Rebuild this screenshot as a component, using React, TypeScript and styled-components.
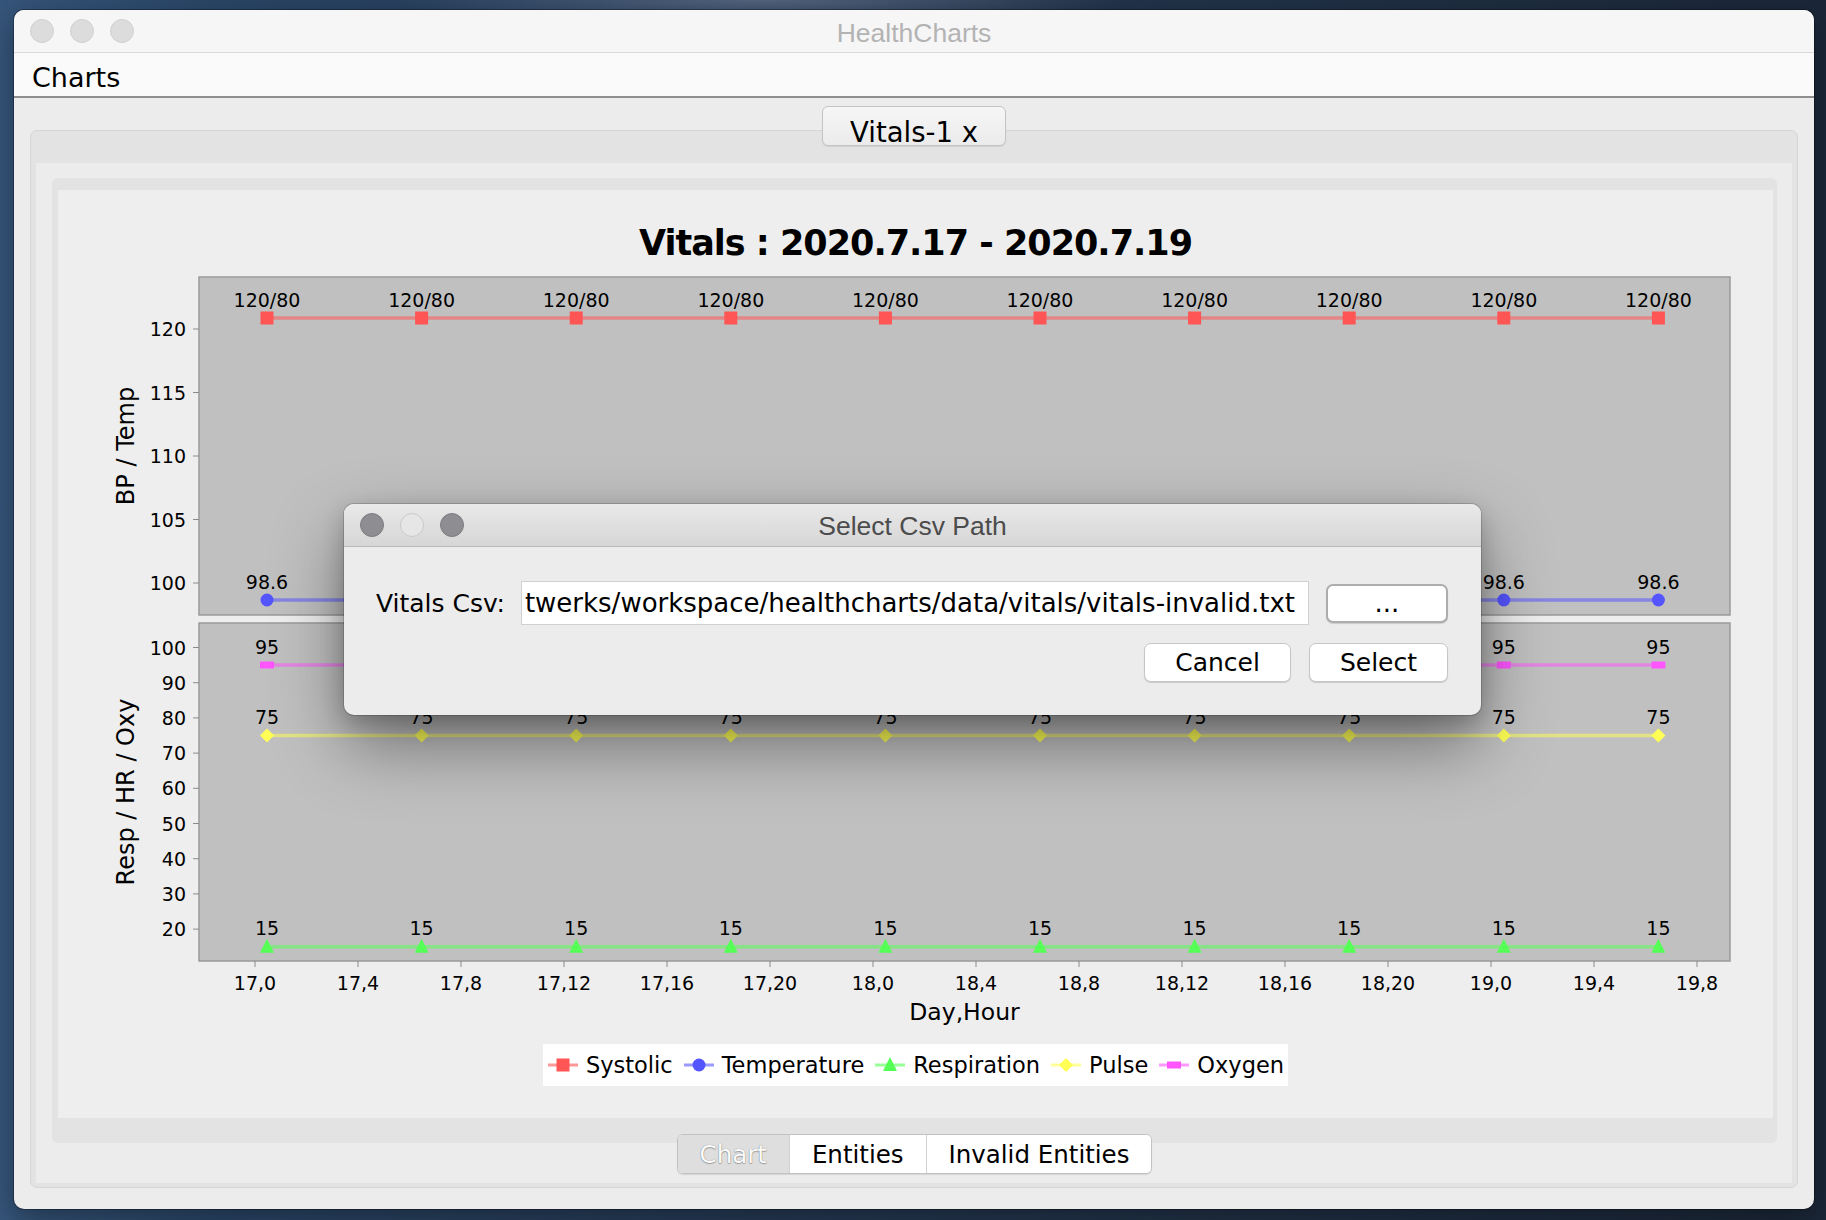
import React from "react";
import styled, { createGlobalStyle } from "styled-components";

const SANS = `"DejaVu Sans", "Noto Sans", sans-serif`;
const MAC = `"Liberation Sans", Arial, sans-serif`;

const GlobalStyle = createGlobalStyle`
  html, body { margin: 0; padding: 0; background: #1f2d40; }
  body { font-family: ${SANS}; color: #000; }
  * { box-sizing: border-box; }
`;

const Desktop = styled.div`
  position: relative;
  width: 1826px;
  height: 1220px;
  overflow: hidden;
  padding: 10px 12px 11px 14px;
  background:
    radial-gradient(ellipse 520px 40px at 760px 0px, rgba(120, 135, 160, 0.55), transparent 70%),
    linear-gradient(90deg, #35557a 0%, #2a4566 12%, #23354d 55%, #1b2738 100%);
`;

const Window = styled.div`
  width: 1800px;
  height: 1199px;
  display: flex;
  flex-direction: column;
  background: #ececec;
  border-radius: 10px;
  overflow: hidden;
  box-shadow: 0 0 0 1px rgba(0, 0, 0, 0.3), 0 10px 30px rgba(0, 0, 0, 0.35);
`;

const TitleBar = styled.div<{ $dialog?: boolean }>`
  height: 43px;
  flex: none;
  display: grid;
  grid-template-columns: 1fr auto 1fr;
  align-items: center;
  background: ${(p) => (p.$dialog ? "linear-gradient(#e9e9e9, #d6d6d6)" : "#f6f6f6")};
  border-bottom: 1px solid ${(p) => (p.$dialog ? "#b9b9b9" : "#d9d9d9")};
`;

const Lights = styled.div`
  display: flex;
  gap: 16px;
  padding-left: 16px;
`;

const Light = styled.span<{ $tone: "idle" | "dark" | "light" }>`
  width: 24px;
  height: 24px;
  border-radius: 50%;
  background: ${(p) => (p.$tone === "dark" ? "#8e8e92" : p.$tone === "light" ? "#e6e6e6" : "#dcdcdc")};
  border: 1px solid ${(p) => (p.$tone === "dark" ? "#7c7c80" : p.$tone === "light" ? "#c8c8c8" : "#d0d0d0")};
`;

const WindowTitle = styled.div<{ $color: string; $shift: number }>`
  font-family: ${MAC};
  font-size: 26.5px;
  color: ${(p) => p.$color};
  white-space: nowrap;
  padding-top: ${(p) => p.$shift}px;
`;

const MenuBar = styled.div`
  height: 45px;
  flex: none;
  display: flex;
  align-items: center;
  padding: 5px 0 0 18px;
  background: #fafafa;
  border-bottom: 2px solid #8e8e8e;
  font-size: 27px;
`;

const Content = styled.div`
  flex: 1;
  display: flex;
  flex-direction: column;
  padding: 8px 16px 21px;
`;

const TopTabRow = styled.div`
  display: flex;
  justify-content: center;
  margin-bottom: -16px;
  position: relative;
  z-index: 1;
`;

const TopTab = styled.div`
  height: 40px;
  display: flex;
  align-items: center;
  padding: 11px 27px 0;
  font-size: 27.5px;
  border: 1px solid #c4c4c4;
  border-radius: 6px;
  background: linear-gradient(#f6f6f6, #ebebeb);
  box-shadow: 0 1px 1px rgba(0, 0, 0, 0.08);
`;

const OuterPane = styled.div`
  flex: 1;
  display: flex;
  flex-direction: column;
  background: #e3e3e3;
  border: 1px solid #d5d5d5;
  border-radius: 7px;
  padding: 32px 5px 4px 5px;
`;

const OuterBody = styled.div`
  flex: 1;
  display: flex;
  flex-direction: column;
  background: #ececec;
  padding: 15px 15px 9px 16px;
`;

const InnerPane = styled.div`
  flex: 1;
  display: flex;
  flex-direction: column;
  background: #e3e3e3;
  border-radius: 6px;
  padding: 12px 4px 25px 6px;
`;

const ChartPanel = styled.div`
  flex: 1;
  display: flex;
  flex-direction: column;
  align-items: center;
  background: #eeeeee;
  padding-top: 33px;
`;

const ChartTitle = styled.div`
  font-size: 35px;
  font-weight: bold;
  letter-spacing: -1px;
  line-height: 40px;
  height: 40px;
  margin-bottom: 1px;
  white-space: nowrap;
`;

const ChartSvg = styled.svg`
  display: block;
  flex: none;
  font-family: ${SANS};
`;

const Legend = styled.div`
  margin-top: 12px;
  height: 42px;
  display: flex;
  align-items: center;
  background: #ffffff;
  padding: 0 4px 0 5px;
`;

const LegendItem = styled.div`
  display: flex;
  align-items: center;
  gap: 8px;
  font-size: 22.5px;
  white-space: nowrap;
  & + & {
    margin-left: 11px;
  }
`;

const BottomTabRow = styled.div`
  display: flex;
  justify-content: center;
  margin-top: -9px;
  position: relative;
  z-index: 1;
`;

const SegGroup = styled.div`
  display: flex;
  height: 40px;
  border: 1px solid #c2c2c2;
  border-radius: 6px;
  overflow: hidden;
  background: #fff;
  box-shadow: 0 1px 1px rgba(0, 0, 0, 0.1);
`;

const Seg = styled.div<{ $selected?: boolean }>`
  display: flex;
  align-items: center;
  padding: 0 22px;
  font-size: 24.5px;
  white-space: nowrap;
  background: ${(p) => (p.$selected ? "#dedede" : "#ffffff")};
  color: ${(p) => (p.$selected ? "#fbfbfb" : "#000")};
  text-shadow: ${(p) => (p.$selected ? "0 0 1px rgba(0,0,0,0.45), 0 1px 1px rgba(0,0,0,0.25)" : "none")};
  & + & {
    border-left: 1px solid #d2d2d2;
  }
`;

const Dialog = styled.div`
  position: absolute;
  left: 344px;
  top: 504px;
  width: 1137px;
  z-index: 10;
  background: #ececec;
  border-radius: 10px;
  overflow: hidden;
  box-shadow: 0 0 0 1px rgba(0, 0, 0, 0.16), 0 30px 70px rgba(0, 0, 0, 0.42), 0 8px 22px rgba(0, 0, 0, 0.2);
`;

const DialogBody = styled.div`
  display: flex;
  flex-direction: column;
  gap: 18px;
  padding: 34px 33px 33px 32px;
`;

const Row = styled.div<{ $end?: boolean }>`
  display: flex;
  align-items: center;
  justify-content: ${(p) => (p.$end ? "flex-end" : "flex-start")};
  gap: ${(p) => (p.$end ? "18px" : "0")};
`;

const FieldLabel = styled.label`
  font-size: 25px;
  margin-right: 16px;
  white-space: nowrap;
`;

const TextField = styled.div`
  flex: 1;
  height: 44px;
  display: flex;
  align-items: center;
  padding-left: 3px;
  background: #ffffff;
  border: 1px solid #d0d0d0;
  font-size: 26px;
  white-space: nowrap;
  overflow: hidden;
`;

const Button = styled.div<{ $browse?: boolean }>`
  height: 39px;
  display: flex;
  align-items: center;
  justify-content: center;
  padding: 0 30px;
  font-size: 25px;
  background: #ffffff;
  border-radius: 7px;
  border: ${(p) => (p.$browse ? "2px solid #adadad" : "1px solid #c6c6c6")};
  box-shadow: 0 1px 1px rgba(0, 0, 0, 0.14);
  ${(p) => (p.$browse ? "width: 122px; margin-left: 17px; padding: 0; font-size: 26px;" : "")}
`;

/* ---------- chart data ---------- */
const POINTS = Array.from({ length: 10 }, (_, i) => 267 + i * 154.6);
const TICKS = [
  "17,0", "17,4", "17,8", "17,12", "17,16", "17,20",
  "18,0", "18,4", "18,8", "18,12", "18,16", "18,20",
  "19,0", "19,4", "19,8",
];
const PL = 199;
const PR = 1730;
const yBP = (v: number) => 583 - (v - 100) * 12.7;
const yResp = (v: number) => 647.5 + (100 - v) * 3.52;

/* dialog rectangle (page coordinates) — labels fully behind it are not drawn */
const DLG = { l: 344, t: 504, r: 1481, b: 715 };
const underDialog = (x: number, baseline: number) =>
  x - 26 >= DLG.l && x + 26 <= DLG.r && baseline - 16 >= DLG.t && baseline + 5 <= DLG.b;

type Shape = "square" | "circle" | "triangle" | "diamond" | "rect";
type Series = { name: string; color: string; shape: Shape; y: number; label: string };

const SERIES: Series[] = [
  { name: "Systolic", color: "#ff5555", shape: "square", y: 318, label: "120/80" },
  { name: "Temperature", color: "#5555ff", shape: "circle", y: 600, label: "98.6" },
  { name: "Respiration", color: "#55ff55", shape: "triangle", y: 946.7, label: "15" },
  { name: "Pulse", color: "#ffff55", shape: "diamond", y: 735.5, label: "75" },
  { name: "Oxygen", color: "#ff55ff", shape: "rect", y: 665, label: "95" },
];

function Marker({ shape, x, y, color }: { shape: Shape; x: number; y: number; color: string }) {
  switch (shape) {
    case "square":
      return <rect x={x - 6.5} y={y - 6.5} width={13} height={13} fill={color} />;
    case "circle":
      return <circle cx={x} cy={y} r={6.5} fill={color} />;
    case "triangle":
      return <polygon points={`${x},${y - 8} ${x + 7},${y + 6} ${x - 7},${y + 6}`} fill={color} />;
    case "diamond":
      return <polygon points={`${x},${y - 7} ${x + 7},${y} ${x},${y + 7} ${x - 7},${y}`} fill={color} />;
    default:
      return <rect x={x - 7} y={y - 3.5} width={14} height={7} fill={color} />;
  }
}

function Chart() {
  const bpTicks = [100, 105, 110, 115, 120];
  const respTicks = [20, 30, 40, 50, 60, 70, 80, 90, 100];
  return (
    <ChartSvg width={1715} height={768} viewBox="58 264 1715 768">
      {/* plots */}
      <rect x={PL} y={277} width={PR - PL} height={338} fill="#c0c0c0" stroke="#9a9a9a" strokeWidth={1.5} />
      <rect x={PL} y={623} width={PR - PL} height={338} fill="#c0c0c0" stroke="#9a9a9a" strokeWidth={1.5} />

      {/* axis titles */}
      <text x={133.5} y={446} fontSize={24} textAnchor="middle" transform="rotate(-90 133.5 446)">
        BP / Temp
      </text>
      <text x={133.5} y={792} fontSize={24} textAnchor="middle" transform="rotate(-90 133.5 792)">
        Resp / HR / Oxy
      </text>
      <text x={964.5} y={1020} fontSize={23.5} textAnchor="middle">
        Day,Hour
      </text>

      {/* y ticks */}
      {bpTicks.map((v) => (
        <g key={`bp${v}`}>
          <line x1={193} x2={199} y1={yBP(v)} y2={yBP(v)} stroke="#8a8a8a" strokeWidth={1} />
          <text x={186} y={yBP(v) + 7} fontSize={19} textAnchor="end">
            {v}
          </text>
        </g>
      ))}
      {respTicks.map((v) => (
        <g key={`rs${v}`}>
          <line x1={193} x2={199} y1={yResp(v)} y2={yResp(v)} stroke="#8a8a8a" strokeWidth={1} />
          <text x={186} y={yResp(v) + 7} fontSize={19} textAnchor="end">
            {v}
          </text>
        </g>
      ))}

      {/* x ticks */}
      {TICKS.map((t, i) => {
        const x = 255 + i * 103;
        return (
          <g key={t}>
            <line x1={x} x2={x} y1={961} y2={967} stroke="#8a8a8a" strokeWidth={1} />
            <text x={x} y={990} fontSize={19} textAnchor="middle">
              {t}
            </text>
          </g>
        );
      })}

      {/* series */}
      {SERIES.map((s) => (
        <g key={s.name}>
          <line
            x1={POINTS[0]}
            x2={POINTS[POINTS.length - 1]}
            y1={s.y}
            y2={s.y}
            stroke={s.color}
            strokeOpacity={0.55}
            strokeWidth={3.5}
          />
          {POINTS.map((x, i) => {
            const base = s.y - 11.5;
            return (
              <g key={i}>
                <Marker shape={s.shape} x={x} y={s.y} color={s.color} />
                {!underDialog(x, base) && (
                  <text x={x} y={base} fontSize={19} textAnchor="middle">
                    {s.label}
                  </text>
                )}
              </g>
            );
          })}
        </g>
      ))}
    </ChartSvg>
  );
}

function LegendIcon({ shape, color }: { shape: Shape; color: string }) {
  return (
    <svg width={30} height={20} viewBox="0 0 30 20">
      <line x1={0} x2={30} y1={10} y2={10} stroke={color} strokeOpacity={0.6} strokeWidth={3} />
      <Marker shape={shape} x={15} y={10} color={color} />
    </svg>
  );
}

export default function App() {
  return (
    <>
      <GlobalStyle />
      <Desktop>
        <Window>
          <TitleBar>
            <Lights>
              <Light $tone="idle" />
              <Light $tone="idle" />
              <Light $tone="idle" />
            </Lights>
            <WindowTitle $color="#b3b3b3" $shift={4}>
              HealthCharts
            </WindowTitle>
            <div />
          </TitleBar>
          <MenuBar>Charts</MenuBar>
          <Content>
            <TopTabRow>
              <TopTab>Vitals-1 x</TopTab>
            </TopTabRow>
            <OuterPane>
              <OuterBody>
                <InnerPane>
                  <ChartPanel>
                    <ChartTitle>Vitals : 2020.7.17 - 2020.7.19</ChartTitle>
                    <Chart />
                    <Legend>
                      {SERIES.map((s) => (
                        <LegendItem key={s.name}>
                          <LegendIcon shape={s.shape} color={s.color} />
                          <span>{s.name}</span>
                        </LegendItem>
                      ))}
                    </Legend>
                  </ChartPanel>
                </InnerPane>
                <BottomTabRow>
                  <SegGroup>
                    <Seg $selected>Chart</Seg>
                    <Seg>Entities</Seg>
                    <Seg>Invalid Entities</Seg>
                  </SegGroup>
                </BottomTabRow>
              </OuterBody>
            </OuterPane>
          </Content>
        </Window>

        <Dialog>
          <TitleBar $dialog>
            <Lights>
              <Light $tone="dark" />
              <Light $tone="light" />
              <Light $tone="dark" />
            </Lights>
            <WindowTitle $color="#4c4c4c" $shift={2}>
              Select Csv Path
            </WindowTitle>
            <div />
          </TitleBar>
          <DialogBody>
            <Row>
              <FieldLabel>Vitals Csv:</FieldLabel>
              <TextField>twerks/workspace/healthcharts/data/vitals/vitals-invalid.txt</TextField>
              <Button $browse>...</Button>
            </Row>
            <Row $end>
              <Button>Cancel</Button>
              <Button>Select</Button>
            </Row>
          </DialogBody>
        </Dialog>
      </Desktop>
    </>
  );
}
